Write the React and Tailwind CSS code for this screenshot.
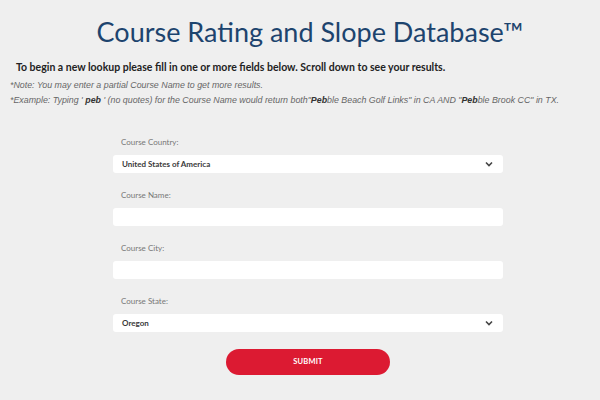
export default function App() {
  const fields = [
    { label: 'Course Country:', type: 'select', value: 'United States of America' },
    { label: 'Course Name:', type: 'input' },
    { label: 'Course City:', type: 'input' },
    { label: 'Course State:', type: 'select', value: 'Oregon' },
  ]

  return (
    <div className="h-[400px] w-[600px] overflow-hidden bg-[#efefef]" style={{ fontFamily: 'Lato, sans-serif' }}>
      <h1 className="pl-[20px] pt-[15px] text-center text-[27px] leading-[34px] text-[#1d446e]">Course Rating and Slope Database™</h1>
      <p className="mt-[11px] pl-[16px] text-[10.5px] font-bold leading-[14px] text-[#222]">
        To begin a new lookup please fill in one or more fields below. Scroll down to see your results.
      </p>
      <div className="mt-[4px] pl-[10px] text-[8.85px] italic leading-[15px] text-[#666]" style={{ fontFamily: '"Liberation Sans", sans-serif' }}>
        <p>*Note: You may enter a partial Course Name to get more results.</p>
        <p>
          *Example: Typing ' <b className="text-[#333]">peb</b> ' (no quotes) for the Course Name would return both"<b className="text-[#333]">Peb</b>ble Beach Golf Links" in CA AND "<b className="text-[#333]">Peb</b>ble Brook CC" in TX.
        </p>
      </div>
      <form className="ml-[113px] mt-[29px] flex w-[390px] flex-col">
        {fields.map((f) => (
          <div key={f.label} className="mb-[17px] flex flex-col">
            <label className="mb-[8px] pl-[8px] text-[8px] leading-[10px] text-[#777]">{f.label}</label>
            {f.type === 'select' ? (
              <div className="flex h-[18px] items-center justify-between rounded-[3px] bg-white pl-[9px] pr-[10px] text-[8px] font-bold text-[#3a3a3a]">
                <span>{f.value}</span>
                <svg width="8" height="6" viewBox="0 0 8 6" fill="none" stroke="#444" strokeWidth="1.6">
                  <path d="M1 1.5l3 3 3-3" />
                </svg>
              </div>
            ) : (
              <input className="h-[18px] rounded-[3px] bg-white px-[8px] text-[8px] outline-none" />
            )}
          </div>
        ))}
        <button type="button" className="mx-auto h-[26px] w-[164px] rounded-full bg-[#dc1a32] text-[7.5px] font-bold tracking-wide text-white">
          SUBMIT
        </button>
      </form>
    </div>
  )
}
